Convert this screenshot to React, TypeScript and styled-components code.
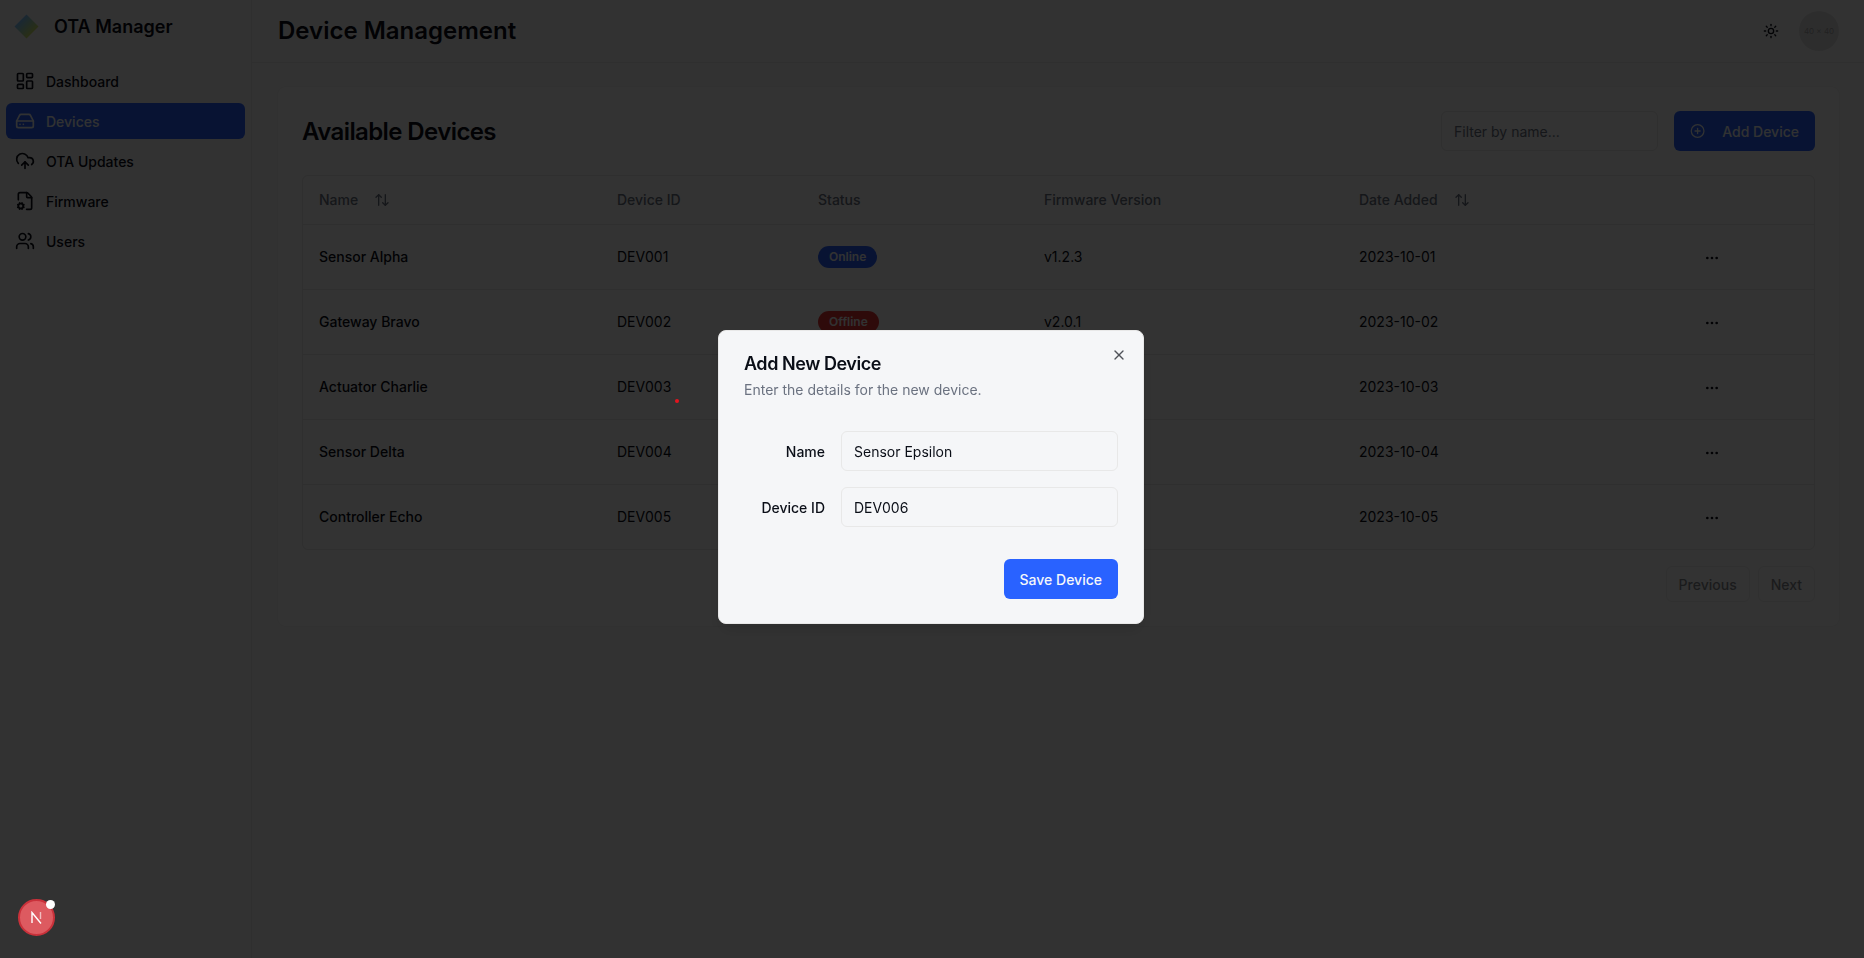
import React from "react";
import styled, { createGlobalStyle } from "styled-components";
import {
    ArrowUpDown,
    CirclePlus,
    CloudUpload,
    FileCog,
    HardDrive,
    LayoutDashboard,
    MoreHorizontal,
    Sun,
    Users,
    X,
} from "lucide-react";

type Device = {
    name: string;
    id: string;
    status: "Online" | "Offline";
    firmware: string;
    date: string;
};

const devices: Device[] = [
    { name: "Sensor Alpha", id: "DEV001", status: "Online", firmware: "v1.2.3", date: "2023-10-01" },
    { name: "Gateway Bravo", id: "DEV002", status: "Offline", firmware: "v2.0.1", date: "2023-10-02" },
    { name: "Actuator Charlie", id: "DEV003", status: "Online", firmware: "v1.1.0", date: "2023-10-03" },
    { name: "Sensor Delta", id: "DEV004", status: "Online", firmware: "v1.2.3", date: "2023-10-04" },
    { name: "Controller Echo", id: "DEV005", status: "Offline", firmware: "v3.0.0", date: "2023-10-05" },
];

const navItems = [
    { label: "Dashboard", icon: LayoutDashboard },
    { label: "Devices", icon: HardDrive, active: true },
    { label: "OTA Updates", icon: CloudUpload },
    { label: "Firmware", icon: FileCog },
    { label: "Users", icon: Users },
];

const GlobalStyle = createGlobalStyle`
    * { box-sizing: border-box; }
    html, body { margin: 0; height: 100%; }
    body {
        font-family: Inter, "Liberation Sans", sans-serif;
        background: #fbfbfb;
        color: #0a0e17;
    }
`;

const App: React.FC = () => {
    return (
        <Shell>
            <GlobalStyle />
            <Sidebar>
                <Brand>
                    <Logo />
                    <BrandName>OTA Manager</BrandName>
                </Brand>
                <Nav>
                    {navItems.map((item) => (
                        <NavItem key={item.label} $active={item.active}>
                            <item.icon size={20} strokeWidth={2} />
                            {item.label}
                        </NavItem>
                    ))}
                </Nav>
            </Sidebar>
            <Main>
                <Header>
                    <PageTitle>Device Management</PageTitle>
                    <HeaderActions>
                        <Sun size={16} strokeWidth={2} />
                        <Avatar>40 × 40</Avatar>
                    </HeaderActions>
                </Header>
                <Content>
                    <Card>
                        <CardHead>
                            <CardTitle>Available Devices</CardTitle>
                            <CardActions>
                                <FilterInput placeholder="Filter by name..." readOnly />
                                <PrimaryButton>
                                    <CirclePlus size={16} strokeWidth={2} />
                                    Add Device
                                </PrimaryButton>
                            </CardActions>
                        </CardHead>
                        <TableWrap>
                            <Table>
                                <thead>
                                    <tr>
                                        <HeadCell $width={298}>
                                            <SortLabel>Name <ArrowUpDown size={16} /></SortLabel>
                                        </HeadCell>
                                        <HeadCell $width={201}>Device ID</HeadCell>
                                        <HeadCell $width={226}>Status</HeadCell>
                                        <HeadCell $width={315}>Firmware Version</HeadCell>
                                        <HeadCell $width={300}>
                                            <SortLabel>Date Added <ArrowUpDown size={16} /></SortLabel>
                                        </HeadCell>
                                        <HeadCell />
                                    </tr>
                                </thead>
                                <tbody>
                                    {devices.map((d) => (
                                        <tr key={d.id}>
                                            <NameCell>{d.name}</NameCell>
                                            <Cell>{d.id}</Cell>
                                            <Cell>
                                                <Badge $offline={d.status === "Offline"}>{d.status}</Badge>
                                            </Cell>
                                            <Cell>{d.firmware}</Cell>
                                            <Cell>{d.date}</Cell>
                                            <ActionCell><MoreHorizontal size={16} /></ActionCell>
                                        </tr>
                                    ))}
                                </tbody>
                            </Table>
                        </TableWrap>
                        <Pagination>
                            <PageButton>Previous</PageButton>
                            <PageButton>Next</PageButton>
                        </Pagination>
                    </Card>
                </Content>
            </Main>

            <Overlay />
            <RedDot />
            <DevBadge>
                <svg width="13" height="13" viewBox="0 0 13 13" fill="none">
                    <path d="M2 12V1.5L11 12.5" stroke="#fff" strokeWidth="1.4" />
                    <path d="M10.5 1v7" stroke="#fff" strokeOpacity="0.6" strokeWidth="1.4" />
                </svg>
                <DevDot />
            </DevBadge>
            <Modal>
                <CloseButton><X size={16} strokeWidth={2} /></CloseButton>
                <ModalTitle>Add New Device</ModalTitle>
                <ModalText>Enter the details for the new device.</ModalText>
                <Form>
                    <FormRow>
                        <FormLabel>Name</FormLabel>
                        <FormInput defaultValue="Sensor Epsilon" />
                    </FormRow>
                    <FormRow>
                        <FormLabel>Device ID</FormLabel>
                        <FormInput defaultValue="DEV006" />
                    </FormRow>
                </Form>
                <ModalFooter>
                    <SaveButton>Save Device</SaveButton>
                </ModalFooter>
            </Modal>
        </Shell>
    );
};

const Shell = styled.div`
    display: flex;
    min-height: 958px;
`;

const Sidebar = styled.aside`
    width: 252px;
    flex-shrink: 0;
    border-right: 1px solid #ececec;
    padding: 0 6px;
`;

const Brand = styled.div`
    display: flex;
    align-items: center;
    gap: 16px;
    height: 53px;
    padding-left: 8px;
`;

const Logo = styled.div`
    width: 17px;
    height: 17px;
    margin: 0 3px 0 4px;
    transform: rotate(45deg);
    background: linear-gradient(90deg, #7fc4ff, #cfe86a);
`;

const BrandName = styled.span`
    font-size: 18px;
    font-weight: 600;
`;

const Nav = styled.nav`
    display: flex;
    flex-direction: column;
    gap: 4px;
    margin-top: 10px;
`;

const NavItem = styled.a<{ $active?: boolean }>`
    display: flex;
    align-items: center;
    gap: 11px;
    height: 36px;
    padding: 0 9px;
    border-radius: 6px;
    font-size: 14px;
    font-weight: 500;
    background: ${(p) => (p.$active ? "#2962ff" : "transparent")};
    color: ${(p) => (p.$active ? "#f5f7fa" : "#0a0e17")};
`;

const Main = styled.main`
    flex: 1;
    display: flex;
    flex-direction: column;
`;

const Header = styled.header`
    display: flex;
    align-items: center;
    justify-content: space-between;
    height: 63px;
    padding: 0 25px 0 26px;
    border-bottom: 1px solid #ececec;
`;

const PageTitle = styled.h1`
    margin: 0 0 2px;
    font-size: 24px;
    font-weight: 600;
`;

const HeaderActions = styled.div`
    display: flex;
    align-items: center;
    gap: 20px;
`;

const Avatar = styled.div`
    width: 40px;
    height: 40px;
    border-radius: 50%;
    background: #e2e2e2;
    color: #a8a8a8;
    font-size: 8px;
    white-space: nowrap;
    display: flex;
    align-items: center;
    justify-content: center;
`;

const Content = styled.div`
    padding: 24px 25px 24px 26px;
`;

const Card = styled.section`
    height: 539px;
    padding: 24px;
    background: #ffffff;
    border-radius: 8px;
    box-shadow: 0 0 0 1px #f2f2f2;
`;

const CardHead = styled.div`
    display: flex;
    align-items: center;
    justify-content: space-between;
    height: 40px;
    margin-bottom: 24px;
`;

const CardTitle = styled.h2`
    margin: 0;
    font-size: 24px;
    font-weight: 600;
    letter-spacing: -0.025em;
`;

const CardActions = styled.div`
    display: flex;
    gap: 16px;
`;

const FilterInput = styled.input`
    width: 217px;
    height: 40px;
    padding: 0 12px;
    border: 1px solid #e8e8e8;
    border-radius: 6px;
    background: transparent;
    font: 14px Inter, sans-serif;

    &::placeholder { color: #6b7280; }
`;

const PrimaryButton = styled.button`
    display: flex;
    align-items: center;
    gap: 17px;
    width: 141px;
    height: 40px;
    padding: 0 16px;
    border: 0;
    border-radius: 6px;
    background: #2962ff;
    color: #f5f7fa;
    font: 500 14px Inter, sans-serif;
    white-space: nowrap;
`;

const TableWrap = styled.div`
    border: 1px solid #e8e8e8;
    border-radius: 6px;
    overflow: hidden;
`;

const Table = styled.table`
    width: 100%;
    border-collapse: collapse;
    table-layout: fixed;
    font-size: 14px;
`;

const HeadCell = styled.th<{ $width?: number }>`
    width: ${(p) => (p.$width ? `${p.$width}px` : "auto")};
    height: 48px;
    padding: 0 16px;
    text-align: left;
    font-weight: 500;
    color: #6b7280;
    border-bottom: 1px solid #e8e8e8;
`;

const SortLabel = styled.span`
    display: inline-flex;
    align-items: center;
    gap: 16px;
`;

const Cell = styled.td`
    height: 65px;
    padding: 0 16px;
    border-bottom: 1px solid #e8e8e8;

    tr:last-child & { border-bottom: 0; }
`;

const NameCell = styled(Cell)`
    font-weight: 500;
`;

const ActionCell = styled(Cell)`
    text-align: right;
    padding-right: 94px;

    svg { display: inline-block; vertical-align: middle; }
`;

const Badge = styled.span<{ $offline?: boolean }>`
    display: inline-block;
    padding: 3px 11px;
    border-radius: 999px;
    font-size: 12px;
    font-weight: 600;
    line-height: 16px;
    color: #f5f7fa;
    background: ${(p) => (p.$offline ? "#e53535" : "#2962ff")};
`;

const Pagination = styled.div`
    display: flex;
    justify-content: flex-end;
    gap: 8px;
    margin-top: 16px;
`;

const PageButton = styled.button`
    height: 36px;
    padding: 0 12px;
    border: 1px solid #e0e0e0;
    border-radius: 6px;
    background: transparent;
    color: #0a0e17;
    opacity: 0.5;
    font: 500 14px Inter, sans-serif;
`;

const Overlay = styled.div`
    position: fixed;
    inset: 0;
    background: rgba(0, 0, 0, 0.8);
`;

const RedDot = styled.span`
    position: fixed;
    left: 675px;
    top: 399px;
    width: 4px;
    height: 4px;
    border-radius: 50%;
    background: #e5141e;
`;

const DevBadge = styled.div`
    position: fixed;
    left: 18px;
    top: 899px;
    width: 37px;
    height: 37px;
    border-radius: 50%;
    border: 2px solid #c9313a;
    background: #dd5a60;
    display: flex;
    align-items: center;
    justify-content: center;
`;

const DevDot = styled.span`
    position: absolute;
    left: 26px;
    top: -1px;
    width: 9px;
    height: 9px;
    border-radius: 50%;
    background: #fff;
`;

const Modal = styled.div`
    position: fixed;
    left: 718px;
    top: 330px;
    width: 426px;
    height: 294px;
    padding: 24px 25px;
    background: #f5f6f8;
    border: 1px solid #e8e8e8;
    border-radius: 8px;
    box-shadow: 0 10px 15px rgba(0, 0, 0, 0.1);
`;

const CloseButton = styled.span`
    position: absolute;
    right: 16px;
    top: 16px;
    display: flex;
    color: #0a0e17;
    opacity: 0.7;
`;

const ModalTitle = styled.h3`
    margin: 0;
    font-size: 18px;
    font-weight: 600;
    line-height: 18px;
    letter-spacing: -0.025em;
`;

const ModalText = styled.p`
    margin: 7px 0 0;
    font-size: 14px;
    line-height: 20px;
    color: #6b7280;
`;

const Form = styled.div`
    display: flex;
    flex-direction: column;
    gap: 16px;
    margin-top: 31px;
`;

const FormRow = styled.label`
    display: grid;
    grid-template-columns: 81px 1fr;
    gap: 16px;
    align-items: center;
`;

const FormLabel = styled.span`
    text-align: right;
    font-size: 14px;
    font-weight: 500;
`;

const FormInput = styled.input`
    width: 100%;
    height: 40px;
    padding: 0 12px;
    border: 1px solid #e8e8e8;
    border-radius: 6px;
    background: transparent;
    color: #0a0e17;
    font: 14px Inter, sans-serif;
`;

const ModalFooter = styled.div`
    display: flex;
    justify-content: flex-end;
    margin-top: 32px;
`;

const SaveButton = styled.button`
    height: 40px;
    padding: 0 16px;
    border: 0;
    border-radius: 6px;
    background: #2962ff;
    color: #f5f7fa;
    font: 500 14px Inter, sans-serif;
`;

export default App;
